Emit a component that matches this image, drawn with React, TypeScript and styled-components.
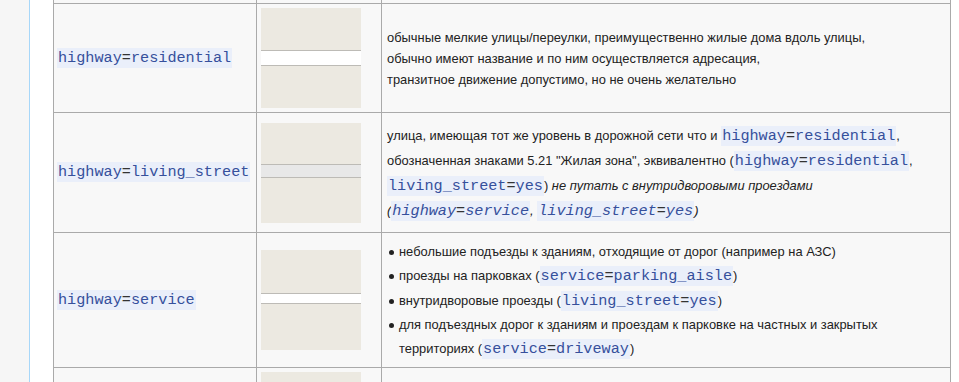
import React from "react";
import styled, { createGlobalStyle } from "styled-components";

const GlobalStyle = createGlobalStyle`
  html, body {
    margin: 0;
    padding: 0;
    background: #f6f6f6;
    overflow: hidden;
  }
  body {
    font-family: "Liberation Sans", Arial, sans-serif;
    color: #222;
  }
`;

const Page = styled.div`
  display: flex;
  height: 382px;
`;

const Rail = styled.div`
  width: 29px;
  flex: none;
  background: #f6f6f6;
`;

const Content = styled.div`
  flex: 1;
  background: #fff;
  border-left: 1px solid #a7d7f9;
  padding: 0 8px 0 23px;
`;

const Table = styled.table`
  border-collapse: collapse;
  table-layout: fixed;
  width: 898px;
  background: #f8f8f8;
`;

const Cell = styled.td<{ $pad?: string }>`
  border: 1px solid #aaa;
  padding: ${(p) => p.$pad || "4px 5px"};
  vertical-align: middle;
  font-size: 12.9px;
`;

const StubCell = styled.td`
  border: 1px solid #aaa;
  border-top: 0;
  padding: 0;
  height: 3px;
`;

const KeyCell = styled(Cell)`
  white-space: nowrap;
  padding-left: 3px;
`;

const Code = styled.code<{ $italic?: boolean }>`
  font-family: "Liberation Mono", "Courier New", monospace;
  font-size: 15.2px;
  line-height: 1;
  font-style: ${(p) => (p.$italic ? "italic" : "normal")};
  background: #eaeffa;
  color: #36509c;
  padding: 1px 1px;
`;

const Eq = styled.span`
  color: #333;
`;

const Desc = styled.div<{ $lh: number; $margin?: string }>`
  line-height: ${(p) => p.$lh}px;
  margin: ${(p) => p.$margin || "0"};
`;

const List = styled.ul`
  list-style: none;
  margin: 3px 0 2px;
  padding: 0;
`;

const Item = styled.li`
  position: relative;
  padding-left: 12px;
  line-height: 24.3px;

  &::before {
    content: "";
    position: absolute;
    left: 2px;
    top: 10px;
    width: 5px;
    height: 5px;
    border-radius: 50%;
    background: #222;
  }
`;

type RoadProps = { y?: number; w?: number; fill?: string };

// little map tile: beige landuse with a horizontal road
const Tile = ({ y, w, fill }: RoadProps) => (
  <svg width="100" height="100" viewBox="0 0 100 100" style={{ display: "block" }}>
    <rect width="100" height="100" fill="#ece9e1" />
    {y !== undefined && w !== undefined && (
      <>
        <rect x="0" y={y} width="100" height={w + 2} fill="#bdbbb6" />
        <rect x="0" y={y + 1} width="100" height={w} fill={fill || "#fff"} />
      </>
    )}
  </svg>
);

const Tag = ({ k, v, italic }: { k: string; v: string; italic?: boolean }) => (
  <Code $italic={italic}>
    {k}
    <Eq>=</Eq>
    {v}
  </Code>
);

const App = () => {
  return (
    <Page>
      <GlobalStyle />
      <Rail />
      <Content>
        <Table>
          <colgroup>
            <col style={{ width: 203 }} />
            <col style={{ width: 125 }} />
            <col />
          </colgroup>
          <tbody>
            <tr>
              <StubCell />
              <StubCell />
              <StubCell />
            </tr>
            <tr>
              <KeyCell>
                <Tag k="highway" v="residential" />
              </KeyCell>
              <Cell $pad="4px 4px">
                <Tile y={42} w={14} />
              </Cell>
              <Cell>
                <Desc $lh={21}>
                  обычные мелкие улицы/переулки, преимущественно жилые дома вдоль улицы,
                  <br />
                  обычно имеют название и по ним осуществляется адресация,
                  <br />
                  транзитное движение допустимо, но не очень желательно
                </Desc>
              </Cell>
            </tr>
            <tr>
              <KeyCell>
                <Tag k="highway" v="living_street" />
              </KeyCell>
              <Cell $pad="4px 4px">
                <Tile y={41} w={12} fill="#e8e8e8" />
              </Cell>
              <Cell>
                <Desc $lh={25} $margin="6px 0 5px">
                  улица, имеющая тот же уровень в дорожной сети что и <Tag k="highway" v="residential" />,
                  <br />
                  обозначенная знаками 5.21 "Жилая зона", эквивалентно (<Tag k="highway" v="residential" />,
                  <br />
                  <Tag k="living_street" v="yes" />) <i>не путать с внутридворовыми проездами</i>
                  <br />
                  <i>
                    (<Tag k="highway" v="service" italic />, <Tag k="living_street" v="yes" italic />)
                  </i>
                </Desc>
              </Cell>
            </tr>
            <tr>
              <KeyCell>
                <Tag k="highway" v="service" />
              </KeyCell>
              <Cell $pad="4px 4px">
                <Tile y={43} w={9} />
              </Cell>
              <Cell>
                <List>
                  <Item>небольшие подъезды к зданиям, отходящие от дорог (например на АЗС)</Item>
                  <Item>
                    проезды на парковках (<Tag k="service" v="parking_aisle" />)
                  </Item>
                  <Item>
                    внутридворовые проезды (<Tag k="living_street" v="yes" />)
                  </Item>
                  <Item>
                    для подъездных дорог к зданиям и проездам к парковке на частных и закрытых
                    <br />
                    территориях (<Tag k="service" v="driveway" />)
                  </Item>
                </List>
              </Cell>
            </tr>
            <tr>
              <KeyCell />
              <Cell $pad="4px 4px">
                <Tile />
              </Cell>
              <Cell />
            </tr>
          </tbody>
        </Table>
      </Content>
    </Page>
  );
};

export default App;
